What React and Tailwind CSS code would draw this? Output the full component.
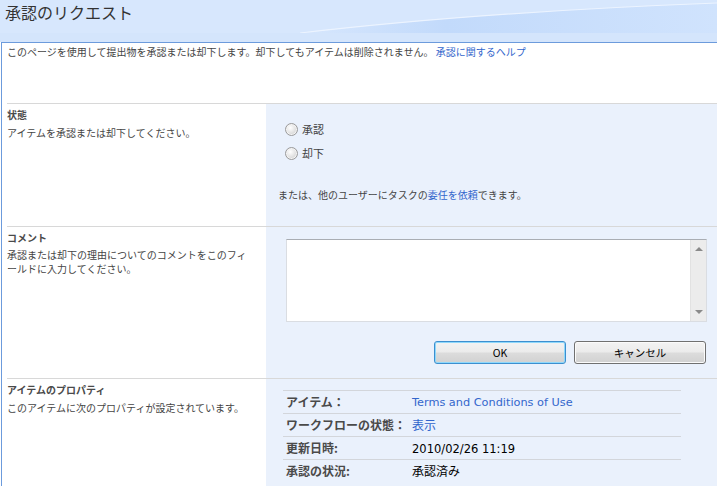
import React from "react";

function Radio({ label }) {
  return (
    <div className="flex h-[24px] items-center gap-[4px]">
      <span className="block h-[13px] w-[13px] rounded-full border border-[#9a9a9a] bg-[radial-gradient(circle_at_40%_35%,#ffffff_0%,#e6e6e6_45%,#c4c4c4_100%)] shadow-[inset_0_0_0_1px_#f4f4f4]" />
      <span className="text-[11px] leading-[14px] text-[#444]">{label}</span>
    </div>
  );
}

function Btn({ children, focused }) {
  return (
    <button
      className={
        "h-[23px] w-[132px] rounded-[3px] border bg-[linear-gradient(to_bottom,#f3f3f3_0%,#ebebeb_48%,#dcdcdc_52%,#d1d1d1_100%)] text-[10.5px] leading-[14px] text-black " +
        (focused
          ? "border-[#3c8fcf] shadow-[inset_0_0_0_1px_#8fd8fb]"
          : "border-[#707070] shadow-[inset_0_0_0_1px_#fbfbfb]")
      }
    >
      {children}
    </button>
  );
}

function PropRow({ label, children }) {
  return (
    <div className="flex h-[23px] items-center border-t border-[#d3d6db] pl-[3px]">
      <div className="w-[126px] text-[12px] font-bold leading-[14px] text-[#4a4a4a]">{label}</div>
      <div className="text-[12px] leading-[14px]">{children}</div>
    </div>
  );
}

export default function App() {
  return (
    <div className="h-[486px] w-[717px] overflow-hidden bg-white font-['Noto_Sans_CJK_JP',sans-serif] text-[#444]">
      <header className="relative h-[42px] bg-[#d7e7fd]">
        <svg className="absolute inset-0" width="717" height="42" viewBox="0 0 717 42">
          <defs>
            <linearGradient id="sw" x1="0" x2="1" y1="0" y2="0">
              <stop offset="0" stopColor="#d7e7fd" />
              <stop offset="0.35" stopColor="#c2dafb" />
              <stop offset="1" stopColor="#d0e3fd" />
            </linearGradient>
          </defs>
          <path d="M300 33 Q 480 12 717 3 L717 33 Z" fill="url(#sw)" />
          <path d="M300 33 Q 480 12 717 3" fill="none" stroke="#eef5ff" strokeWidth="1.2" opacity="0.9" />
          <rect x="0" y="33" width="717" height="9" fill="#d4e5fc" />
        </svg>
        <h1 className="relative pl-[5px] pt-[1px] text-[16px] font-normal leading-[22px] text-[#333]">
          承認のリクエスト
        </h1>
      </header>
      <div className="ml-px border-l border-t border-[#6c9bdc]">
        <div className="h-[60px] pl-[5px] pt-[2px] text-[10px] leading-[14px] text-[#444]">
          このページを使用して提出物を承認または却下します。却下してもアイテムは削除されません。{" "}
          <span className="text-[#3366cc]">承認に関するヘルプ</span>
        </div>
        <div className="ml-[5px]">
          {/* 状態 */}
          <div className="flex h-[123px] border-t border-[#d8d8d8]">
            <div className="w-[259px] pt-[4px]">
              <div className="text-[10px] font-bold leading-[14px] text-[#4a4a4a]">状態</div>
              <div className="mt-[5px] text-[10px] leading-[12px]">アイテムを承認または却下してください。</div>
            </div>
            <div className="flex-1 bg-[#eaf1fc] pl-[12px] pt-[13px]">
              <div className="pl-[7px]">
                <Radio label="承認" />
                <Radio label="却下" />
              </div>
              <div className="mt-[23px] text-[10px] leading-[14px]">
                または、他のユーザーにタスクの<span className="text-[#3366cc]">委任を依頼</span>できます。
              </div>
            </div>
          </div>
          {/* コメント */}
          <div className="flex h-[152px] border-t border-[#d8d8d8]">
            <div className="w-[259px] pt-[4px]">
              <div className="text-[10px] font-bold leading-[14px] text-[#4a4a4a]">コメント</div>
              <div className="mt-[3px] text-[10px] leading-[14px]">
                <div>承認または却下の理由についてのコメントをこのフィ</div>
                <div>ールドに入力してください。</div>
              </div>
            </div>
            <div className="flex-1 bg-[#eaf1fc] pl-[20px] pr-[10px] pt-[12px]">
              <div className="flex h-[83px] border border-[#dadde2] border-t-[#a9adb3] bg-white">
                <div className="flex-1" />
                <div className="flex w-[16px] flex-col items-center justify-between border-l border-[#e2e2e2] bg-[#ececec] py-[7px]">
                  <span className="block h-0 w-0 border-x-[4px] border-b-[4px] border-x-transparent border-b-[#8a8a8a]" />
                  <span className="block h-0 w-0 border-x-[4px] border-t-[4px] border-x-transparent border-t-[#8a8a8a]" />
                </div>
              </div>
              <div className="mt-[19px] flex justify-end gap-[8px] pr-px">
                <Btn focused>OK</Btn>
                <Btn>キャンセル</Btn>
              </div>
            </div>
          </div>
          {/* アイテムのプロパティ */}
          <div className="flex h-[200px] border-t border-[#d8d8d8]">
            <div className="w-[259px] pt-[4px]">
              <div className="text-[10px] font-bold leading-[14px] text-[#4a4a4a]">アイテムのプロパティ</div>
              <div className="mt-[5px] text-[10px] leading-[12px]">このアイテムに次のプロパティが設定されています。</div>
            </div>
            <div className="flex-1 bg-[#eaf1fc] pl-[17px] pt-[11px]">
              <div className="w-[398px]">
                <PropRow label="アイテム：">
                  <span className="font-['DejaVu_Sans',sans-serif] text-[11.3px] text-[#3366cc]">Terms and Conditions of Use</span>
                </PropRow>
                <PropRow label="ワークフローの状態：">
                  <span className="text-[#3366cc]">表示</span>
                </PropRow>
                <PropRow label="更新日時:">
                  <span className="font-['DejaVu_Sans',sans-serif] text-[11.5px] text-black">2010/02/26 11:19</span>
                </PropRow>
                <PropRow label="承認の状況:">
                  <span className="text-black">承認済み</span>
                </PropRow>
              </div>
            </div>
          </div>
        </div>
      </div>
    </div>
  );
}
